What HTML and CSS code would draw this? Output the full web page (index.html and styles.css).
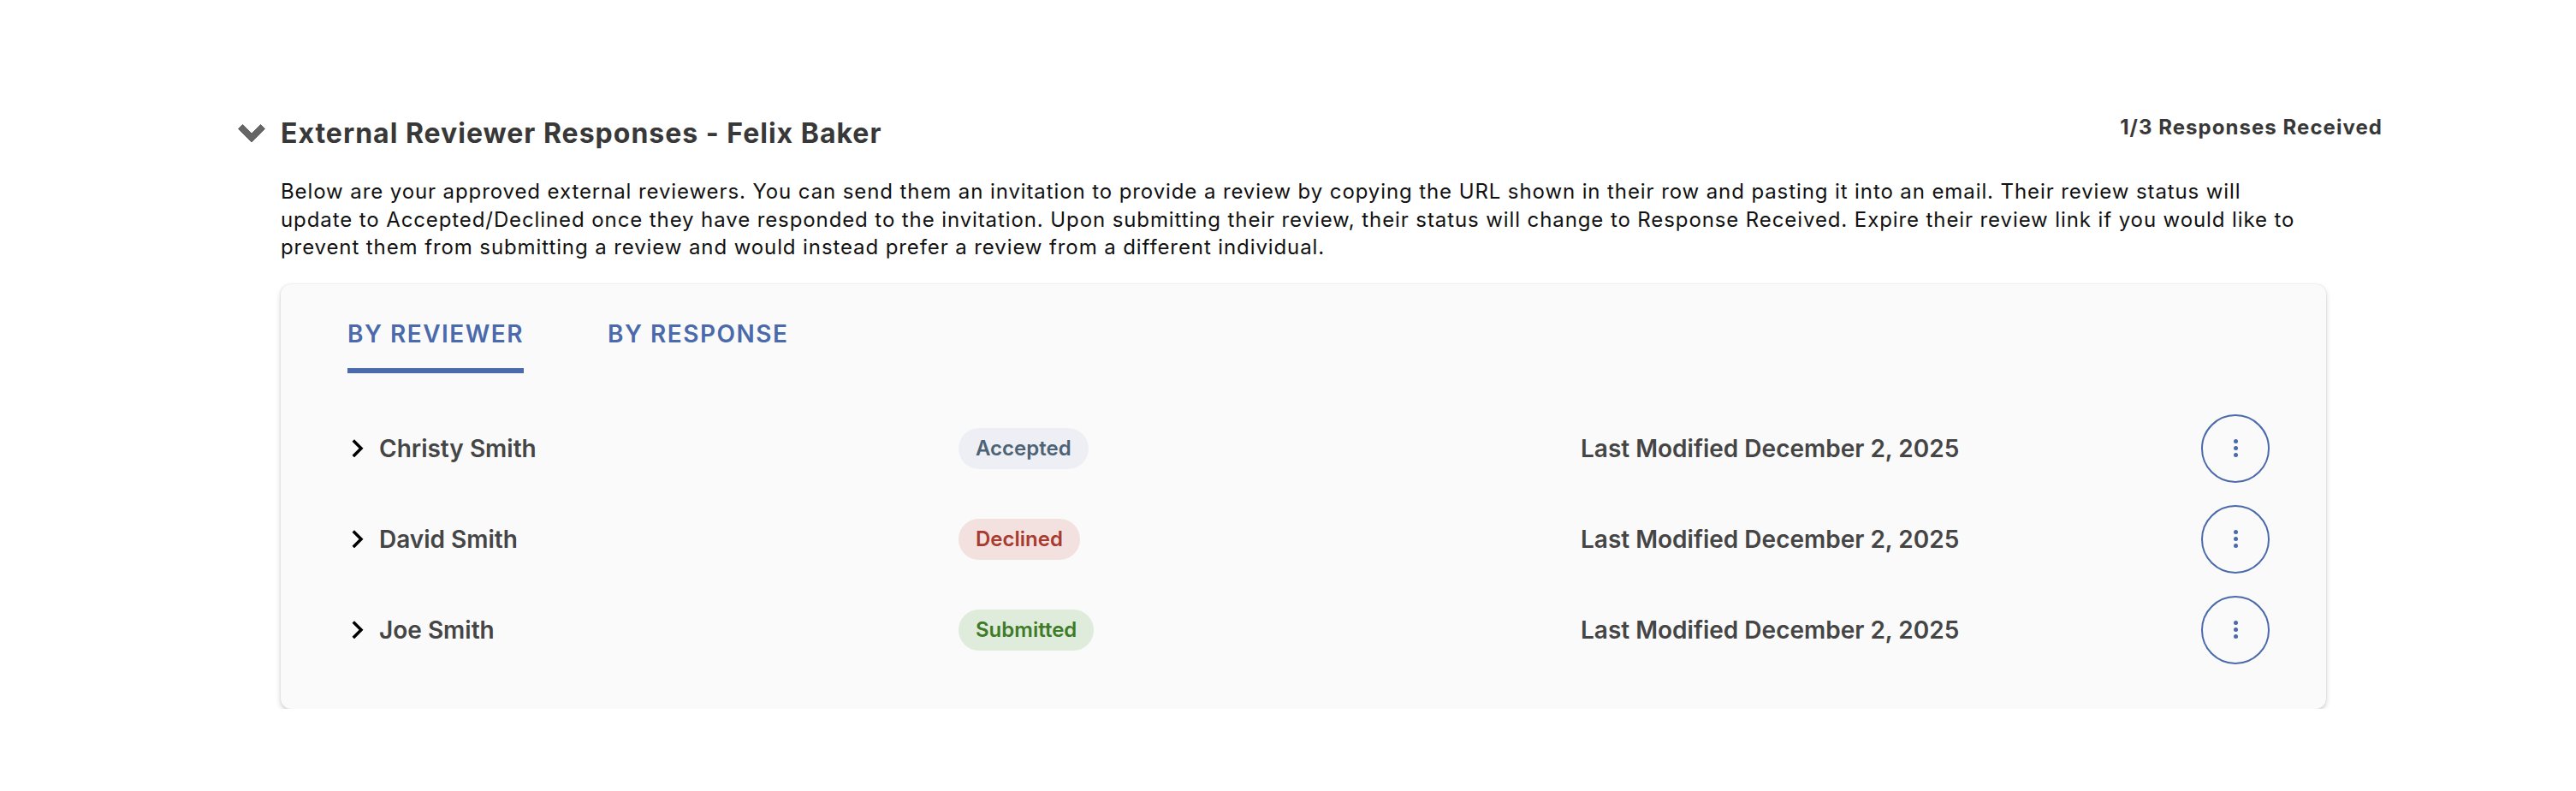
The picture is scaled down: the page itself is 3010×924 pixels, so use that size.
FILE: index.html
```html
<!DOCTYPE html>
<html lang="en">
<head>
<meta charset="utf-8">
<title>External Reviewer Responses</title>
<link rel="stylesheet" href="styles.css">
</head>
<body>
<section class="section">
  <header class="header">
    <div class="title-wrap">
      <svg class="collapse-icon" width="32" height="21" viewBox="0 0 32 21" aria-hidden="true">
        <polygon points="0.5,5.5 5.5,0.5 16,11 26.5,0.5 31.5,5.5 16,21" fill="#666" stroke="#666" stroke-width="1" stroke-linejoin="round"/>
      </svg>
      <h2 class="title">External Reviewer Responses - Felix Baker</h2>
    </div>
    <div class="count">1/3 Responses Received</div>
  </header>
  <div class="body">
    <p class="description">Below are your approved external reviewers. You can send them an invitation to provide a review by copying the URL shown in their row and pasting it into an email. Their review status will update to Accepted/Declined once they have responded to the invitation. Upon submitting their review, their status will change to Response Received. Expire their review link if you would like to prevent them from submitting a review and would instead prefer a review from a different individual.</p>
    <div class="card">
      <nav class="tabs">
        <div class="tab active">BY REVIEWER</div>
        <div class="tab">BY RESPONSE</div>
      </nav>
      <div class="rows">
        <div class="row">
          <div class="name-cell">
            <svg class="expand-icon" width="14" height="21.7" viewBox="8.29 5.8 8 12.4" aria-hidden="true"><path d="M8.59 16.59 13.17 12 8.59 7.41 10 6l6 6-6 6z" fill="#000"/></svg>
            <span class="name">Christy Smith</span>
          </div>
          <div><span class="badge accepted">Accepted</span></div>
          <div class="modified">Last Modified December 2, 2025</div>
          <button class="kebab" aria-label="More actions"><span class="dot"></span><span class="dot"></span><span class="dot"></span></button>
        </div>
        <div class="row">
          <div class="name-cell">
            <svg class="expand-icon" width="14" height="21.7" viewBox="8.29 5.8 8 12.4" aria-hidden="true"><path d="M8.59 16.59 13.17 12 8.59 7.41 10 6l6 6-6 6z" fill="#000"/></svg>
            <span class="name">David Smith</span>
          </div>
          <div><span class="badge declined">Declined</span></div>
          <div class="modified">Last Modified December 2, 2025</div>
          <button class="kebab" aria-label="More actions"><span class="dot"></span><span class="dot"></span><span class="dot"></span></button>
        </div>
        <div class="row">
          <div class="name-cell">
            <svg class="expand-icon" width="14" height="21.7" viewBox="8.29 5.8 8 12.4" aria-hidden="true"><path d="M8.59 16.59 13.17 12 8.59 7.41 10 6l6 6-6 6z" fill="#000"/></svg>
            <span class="name">Joe Smith</span>
          </div>
          <div><span class="badge submitted">Submitted</span></div>
          <div class="modified">Last Modified December 2, 2025</div>
          <button class="kebab" aria-label="More actions"><span class="dot"></span><span class="dot"></span><span class="dot"></span></button>
        </div>
      </div>
    </div>
  </div>
</section>
</body>
</html>
```
FILE: styles.css
```css
* { box-sizing: border-box; }

html, body {
  margin: 0;
  padding: 0;
  background: #ffffff;
}

body {
  font-family: Inter, "Noto Sans", "Liberation Sans", sans-serif;
  color: #111;
}

.section {
  margin: 0 226px 0 278px;
  padding-top: 134px;
}

.header {
  display: flex;
  justify-content: space-between;
  align-items: flex-start;
}

.title-wrap {
  display: flex;
  align-items: center;
  gap: 18px;
  padding-top: 2px;
}

.collapse-icon {
  display: block;
  flex: none;
}

.title {
  margin: 0;
  font-size: 32px;
  line-height: 39px;
  font-weight: 700;
  letter-spacing: 1px;
  color: #383838;
}

.count {
  font-size: 24px;
  line-height: 29px;
  font-weight: 700;
  letter-spacing: 1.05px;
  color: #383838;
}

.body {
  margin: 0 66px 0 50px;
}

.description {
  margin: 33px 0 0;
  font-size: 24px;
  line-height: 32.5px;
  letter-spacing: 0.9px;
  color: #111;
  max-width: 2374px;
}

.card {
  margin-top: 26px;
  background: #fafafa;
  border-radius: 12px;
  box-shadow: 0 3px 6px rgba(0, 0, 0, 0.18), 0 0 2px rgba(0, 0, 0, 0.12);
  padding: 40px 66px 39px 0;
}

.tabs {
  display: flex;
  gap: 98px;
  padding-left: 78px;
}

.tab {
  font-size: 28px;
  line-height: 36px;
  font-weight: 600;
  letter-spacing: 1.5px;
  color: #4a6aab;
  padding-bottom: 22px;
  border-bottom: 6px solid transparent;
}

.tab.active {
  border-bottom-color: #4a6aab;
}

.rows {
  margin-top: 35px;
}

.row {
  display: grid;
  grid-template-columns: 709px 727px 1fr 80px;
  align-items: center;
  height: 106px;
  padding-left: 83px;
}

.name-cell {
  display: flex;
  align-items: center;
  gap: 18px;
}

.expand-icon {
  display: block;
  flex: none;
}

.name {
  font-size: 28px;
  font-weight: 600;
  color: #454545;
}

.badge {
  display: inline-flex;
  align-items: center;
  height: 48px;
  padding: 0 20px;
  border-radius: 24px;
  font-size: 24px;
  font-weight: 600;
}

.badge.accepted { background: #edeff4; color: #4d6375; }
.badge.declined { background: #f2e1df; color: #a83a30; }
.badge.submitted { background: #dfecdb; color: #3e7b28; }

.modified {
  font-size: 28px;
  font-weight: 600;
  color: #454545;
}

.kebab {
  width: 80px;
  height: 80px;
  border-radius: 50%;
  border: 2px solid #4a6aab;
  background: transparent;
  padding: 0;
  display: flex;
  flex-direction: column;
  align-items: center;
  justify-content: center;
  gap: 3px;
  cursor: pointer;
}

.dot {
  display: block;
  width: 5px;
  height: 5px;
  border-radius: 50%;
  background: #4a6aab;
}
```
